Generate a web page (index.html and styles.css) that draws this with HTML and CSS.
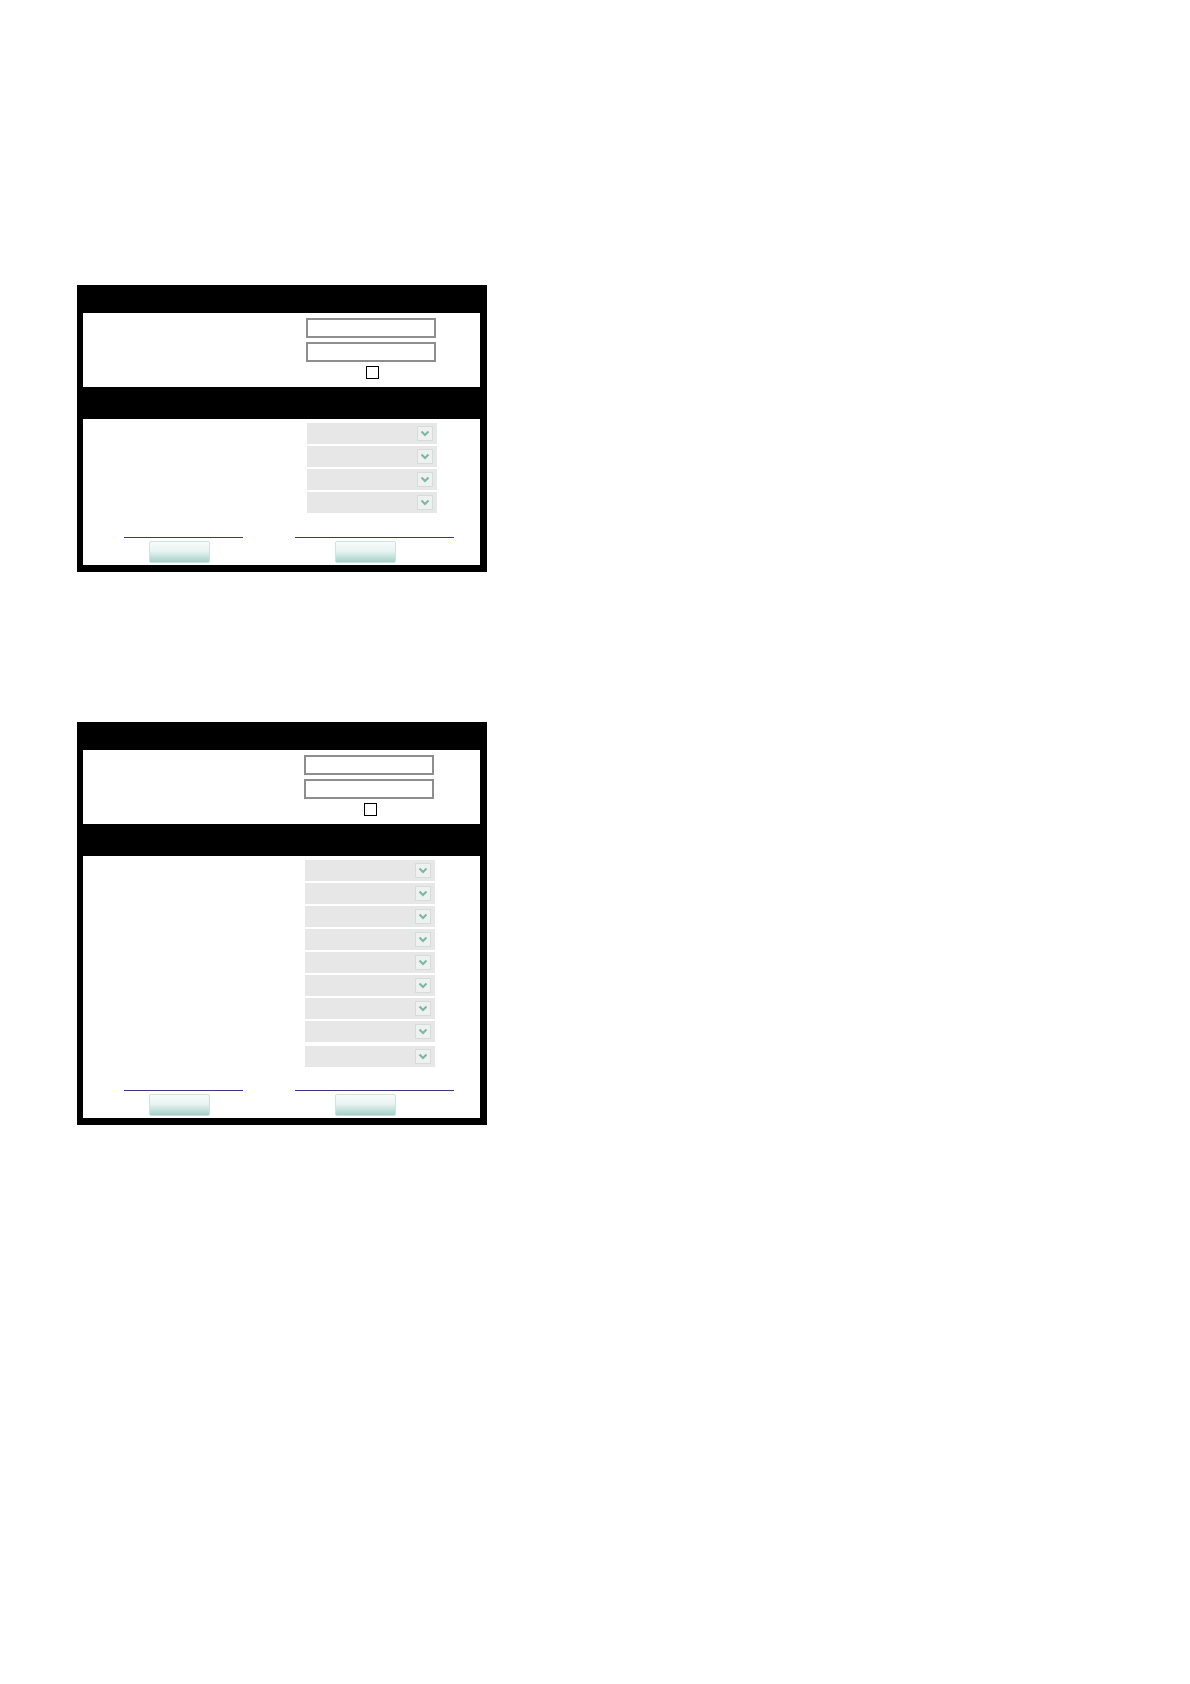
FILE: index.html
```html
<!DOCTYPE html>
<html lang="en">
<head>
<meta charset="utf-8">
<title>Settings</title>
<link rel="stylesheet" href="styles.css">
</head>
<body>
<main class="page">
  <form class="panel panel-a">
    <div class="bar bar-top"></div>
    <div class="section section-login">
      <div class="labels"></div>
      <div class="fields">
        <input class="text" type="text">
        <input class="text" type="password">
        <span class="check"></span>
      </div>
    </div>
    <div class="bar bar-mid"></div>
    <div class="section section-options">
      <div class="labels"></div>
      <div class="selects">
        <div class="select"><span class="arrow"><svg viewBox="0 0 14 13" width="14" height="13"><path d="M3.5 4.5 L7 8 L10.5 4.5" fill="none" stroke="#7fb5a6" stroke-width="2"/></svg></span></div>
        <div class="select"><span class="arrow"><svg viewBox="0 0 14 13" width="14" height="13"><path d="M3.5 4.5 L7 8 L10.5 4.5" fill="none" stroke="#7fb5a6" stroke-width="2"/></svg></span></div>
        <div class="select"><span class="arrow"><svg viewBox="0 0 14 13" width="14" height="13"><path d="M3.5 4.5 L7 8 L10.5 4.5" fill="none" stroke="#7fb5a6" stroke-width="2"/></svg></span></div>
        <div class="select"><span class="arrow"><svg viewBox="0 0 14 13" width="14" height="13"><path d="M3.5 4.5 L7 8 L10.5 4.5" fill="none" stroke="#7fb5a6" stroke-width="2"/></svg></span></div>
      </div>
      <div class="footer">
        <div class="col col-left">
          <a class="link" href="#"></a>
          <button class="btn" type="button"></button>
        </div>
        <div class="col col-right">
          <a class="link" href="#"></a>
          <button class="btn" type="button"></button>
        </div>
      </div>
    </div>
  </form>

  <form class="panel panel-b">
    <div class="bar bar-top"></div>
    <div class="section section-login">
      <div class="labels"></div>
      <div class="fields">
        <input class="text" type="text">
        <input class="text" type="password">
        <span class="check"></span>
      </div>
    </div>
    <div class="bar bar-mid"></div>
    <div class="section section-options">
      <div class="labels"></div>
      <div class="selects">
        <div class="select"><span class="arrow"><svg viewBox="0 0 14 13" width="14" height="13"><path d="M3.5 4.5 L7 8 L10.5 4.5" fill="none" stroke="#7fb5a6" stroke-width="2"/></svg></span></div>
        <div class="select"><span class="arrow"><svg viewBox="0 0 14 13" width="14" height="13"><path d="M3.5 4.5 L7 8 L10.5 4.5" fill="none" stroke="#7fb5a6" stroke-width="2"/></svg></span></div>
        <div class="select"><span class="arrow"><svg viewBox="0 0 14 13" width="14" height="13"><path d="M3.5 4.5 L7 8 L10.5 4.5" fill="none" stroke="#7fb5a6" stroke-width="2"/></svg></span></div>
        <div class="select"><span class="arrow"><svg viewBox="0 0 14 13" width="14" height="13"><path d="M3.5 4.5 L7 8 L10.5 4.5" fill="none" stroke="#7fb5a6" stroke-width="2"/></svg></span></div>
        <div class="select"><span class="arrow"><svg viewBox="0 0 14 13" width="14" height="13"><path d="M3.5 4.5 L7 8 L10.5 4.5" fill="none" stroke="#7fb5a6" stroke-width="2"/></svg></span></div>
        <div class="select"><span class="arrow"><svg viewBox="0 0 14 13" width="14" height="13"><path d="M3.5 4.5 L7 8 L10.5 4.5" fill="none" stroke="#7fb5a6" stroke-width="2"/></svg></span></div>
        <div class="select"><span class="arrow"><svg viewBox="0 0 14 13" width="14" height="13"><path d="M3.5 4.5 L7 8 L10.5 4.5" fill="none" stroke="#7fb5a6" stroke-width="2"/></svg></span></div>
        <div class="select"><span class="arrow"><svg viewBox="0 0 14 13" width="14" height="13"><path d="M3.5 4.5 L7 8 L10.5 4.5" fill="none" stroke="#7fb5a6" stroke-width="2"/></svg></span></div>
        <div class="select select-last"><span class="arrow"><svg viewBox="0 0 14 13" width="14" height="13"><path d="M3.5 4.5 L7 8 L10.5 4.5" fill="none" stroke="#7fb5a6" stroke-width="2"/></svg></span></div>
      </div>
      <div class="footer">
        <div class="col col-left">
          <a class="link" href="#"></a>
          <button class="btn" type="button"></button>
        </div>
        <div class="col col-right">
          <a class="link" href="#"></a>
          <button class="btn" type="button"></button>
        </div>
      </div>
    </div>
  </form>
</main>
</body>
</html>
```

FILE: styles.css
```css
html, body {
  margin: 0;
  padding: 0;
  background: #ffffff;
  font-family: "Liberation Sans", Arial, sans-serif;
  font-size: 12px;
}

.page {
  display: flex;
  flex-direction: column;
  align-items: flex-start;
  gap: 150px;
  padding: 285px 0 0 77px;
}

.panel {
  width: 410px;
  box-sizing: border-box;
  background: #000000;
  padding: 0 7px 7px 6px;
  margin: 0;
}

.bar-top {
  height: 28px;
}

.bar-mid {
  height: 32px;
}

.section {
  background: #ffffff;
}

.section-login {
  display: grid;
  grid-template-columns: 223px 1fr;
  height: 74px;
  box-sizing: border-box;
  padding-top: 5px;
}

.panel-b .section-login {
  grid-template-columns: 221px 1fr;
}

.fields {
  display: flex;
  flex-direction: column;
  gap: 4px;
}

.text {
  display: block;
  width: 130px;
  height: 20px;
  box-sizing: border-box;
  margin: 0;
  padding: 0 3px;
  border: 2px solid #8e8e8e;
  border-radius: 0;
  background: #ffffff;
  font: inherit;
  outline: none;
}

.check {
  display: block;
  width: 13px;
  height: 13px;
  box-sizing: border-box;
  margin-left: 60px;
  border: 1px solid #000000;
  background: #ffffff;
}

.section-options {
  display: grid;
  grid-template-columns: 224px 1fr;
  padding: 4px 0 2px;
}

.panel-b .section-options {
  grid-template-columns: 222px 1fr;
}

.selects {
  display: flex;
  flex-direction: column;
  gap: 2px;
}

.select {
  display: flex;
  justify-content: flex-end;
  align-items: flex-start;
  width: 130px;
  height: 21px;
  box-sizing: border-box;
  padding: 4px 5px 0 0;
  background: #e7e7e7;
}

.select-last {
  margin-top: 2px;
}

.arrow {
  display: block;
  width: 14px;
  height: 13px;
  box-sizing: border-box;
  background: #eef1ef;
  outline: 1px solid #d3ddd9;
}

.arrow svg {
  display: block;
}

.footer {
  grid-column: 1 / -1;
  display: grid;
  grid-template-columns: 200px 1fr;
  margin-top: 23px;
}

.panel-a .footer {
  margin-top: 24px;
}

.col {
  display: flex;
  flex-direction: column;
  align-items: flex-start;
}

.link {
  display: block;
  height: 0;
  border-bottom: 1px solid #3f3584;
  margin-bottom: 3px;
}

.col-left .link {
  width: 119px;
  margin-left: 41px;
}

.col-right .link {
  width: 159px;
  margin-left: 12px;
}

.btn {
  display: block;
  width: 61px;
  height: 22px;
  box-sizing: border-box;
  margin: 0;
  padding: 0;
  border: 1px solid #cfe2de;
  border-radius: 2px;
  background: linear-gradient(to bottom, #f7fbfb 0%, #e9f4f2 45%, #c4e1dc 75%, #a6cfc7 100%);
}

.col-left .btn {
  margin-left: 66px;
}

.col-right .btn {
  margin-left: 52px;
}
```
